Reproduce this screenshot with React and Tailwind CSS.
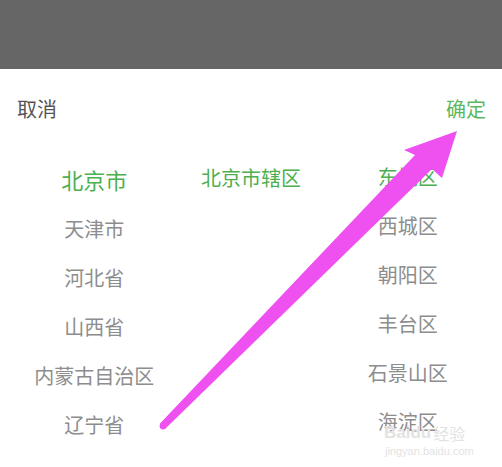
import React from "react";

const provinces = ["北京市", "天津市", "河北省", "山西省", "内蒙古自治区", "辽宁省"];
const cities = ["北京市辖区"];
const districts = ["东城区", "西城区", "朝阳区", "丰台区", "石景山区", "海淀区"];

const font = { fontFamily: '"Noto Sans CJK SC", "Noto Sans", sans-serif' };

const Column = ({ items, selected = 0, big = false, className = "" }) => (
  <div className={`flex flex-col items-center ${className}`}>
    {items.map((item, i) => (
      <div
        key={item}
        className={`h-[49px] flex items-center whitespace-nowrap ${
          i === selected
            ? `text-[#4caf50] ${big ? "text-[22px]" : "text-[20px]"}`
            : "text-[#8d8d8d] text-[20px]"
        }`}
      >
        {item}
      </div>
    ))}
  </div>
);

export default function App() {
  return (
    <div className="relative w-[502px] h-[467px] bg-white overflow-hidden" style={font}>
      <div className="h-[69px] bg-[#666666]" />

      <div className="h-[80px] flex items-center justify-between pl-[17px] pr-[16px] text-[20px]">
        <span className="text-[#555555]">取消</span>
        <span className="text-[#5cb860]">确定</span>
      </div>

      <div className="grid grid-cols-3 px-4">
        <Column items={provinces} big className="pt-[6px]" />
        <Column items={cities} className="pt-[4px]" />
        <Column items={districts} className="pt-[3px]" />
      </div>

      {/* watermark */}
      <div className="absolute left-[384px] top-[424px] flex flex-col items-start leading-none text-[#e3e3e3]">
        <div className="flex items-end gap-[2px]">
          <span className="text-[17px] font-bold" style={{ fontFamily: '"Liberation Sans", sans-serif' }}>
            Baidu
          </span>
          <span className="text-[16px]">经验</span>
        </div>
        <span className="text-[11px] mt-[5px] ml-[1px]" style={{ fontFamily: '"Liberation Sans", sans-serif' }}>
          jingyan.baidu.com
        </span>
      </div>

      {/* annotation arrow */}
      <svg className="absolute inset-0" width="502" height="467" viewBox="0 0 502 467">
        <polygon
          points="160,423.5 415,155 404,150 457,131 442,178 432,169 165.5,428.5"
          fill="#ef50f0"
        />
        <circle cx="163" cy="426" r="3.4" fill="#ef50f0" />
      </svg>
    </div>
  );
}
